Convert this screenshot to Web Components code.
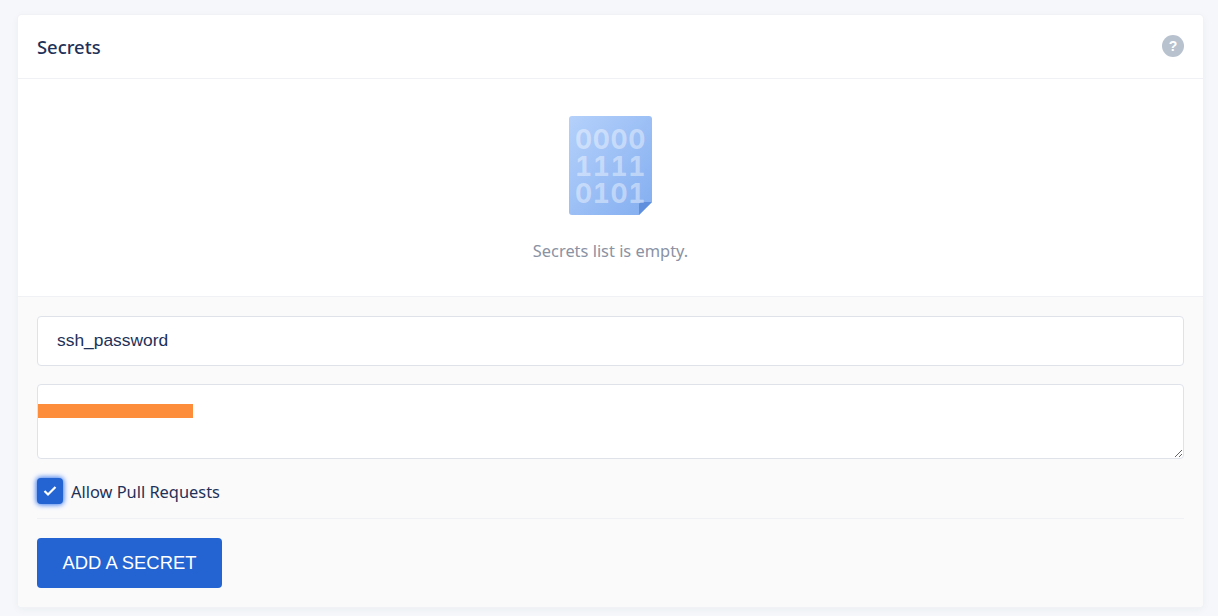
<!DOCTYPE html>
<html>
<head>
<meta charset="utf-8">
<style>
  html, body { margin: 0; height: 616px; overflow: hidden; background: #f5f7fa; }
  body { padding: 15px 15px 0 18px; box-sizing: border-box; font-family: "Noto Sans", sans-serif; color: #1e3158; }
</style>
</head>
<body>
<secrets-card>
  <span slot="title">Secrets</span>
  <empty-state>Secrets list is empty.</empty-state>
  <secret-form slot="footer"></secret-form>
</secrets-card>

<script>
class SecretsCard extends HTMLElement {
  constructor() {
    super();
    this.attachShadow({ mode: "open" });
    this.shadowRoot.innerHTML = `
      <style>
        :host {
          display: block;
          background: #fff;
          border-radius: 4px;
          box-shadow: 0 0 0 1px #f0f2f6, 0 2px 8px rgba(40,50,80,0.05);
          overflow: hidden;
        }
        header {
          height: 64px;
          box-sizing: border-box;
          padding: 0 19px 0 19px;
          display: flex;
          align-items: center;
          justify-content: space-between;
          border-bottom: 1px solid #eff1f5;
          font-size: 18.4px;
          font-weight: 500;
          color: #1e3158;
        }
        .help {
          width: 22px;
          height: 22px;
          margin-top: -1px;
          border-radius: 50%;
          background: #b8c2cf;
          color: #fff;
          font: 700 14px/22px "Liberation Sans", sans-serif;
          text-align: center;
        }
        footer { background: #fafafb; border-top: 1px solid #eff1f5; }
      </style>
      <header><slot name="title"></slot><div class="help">?</div></header>
      <slot></slot>
      <footer><slot name="footer"></slot></footer>
    `;
  }
}

class EmptyState extends HTMLElement {
  constructor() {
    super();
    this.attachShadow({ mode: "open" });
    this.shadowRoot.innerHTML = `
      <style>
        :host {
          display: flex;
          flex-direction: column;
          align-items: center;
          height: 217px;
          box-sizing: border-box;
          padding-top: 37px;
          color: #8a92a3;
          font-size: 16.4px;
          line-height: 22px;
        }
        .icon { position: relative; width: 84px; height: 100px; margin-bottom: 24px; }
        svg { display: block; }
        .bits {
          position: absolute;
          left: 0;
          right: 0;
          top: 10px;
          text-align: center;
          font: 700 26.5px/27px Inter, sans-serif;
          font-variant-numeric: tabular-nums;
          letter-spacing: .6px;
          color: rgba(255,255,255,.42);
        }
      </style>
      <div class="icon">
        <svg width="84" height="100" viewBox="0 0 84 100">
          <defs>
            <linearGradient id="page" x1="0" y1="0" x2="1" y2="1">
              <stop offset="0" stop-color="#b5d1fb"/>
              <stop offset="1" stop-color="#83aef0"/>
            </linearGradient>
          </defs>
          <path d="M3 0H80a3 3 0 0 1 3 3V86L70 99H3a3 3 0 0 1-3-3V3a3 3 0 0 1 3-3Z" fill="url(#page)"/>
          <path d="M83 86L70 99V89a3 3 0 0 1 3-3Z" fill="#5f8fdd"/>
        </svg>
        <div class="bits"><div>0000</div><div>1111</div><div>0101</div></div>
      </div>
      <slot></slot>
    `;
  }
}

class SecretForm extends HTMLElement {
  constructor() {
    super();
    this.attachShadow({ mode: "open" });
    this.shadowRoot.innerHTML = `
      <style>
        :host { display: block; padding: 19px 19px 19px 19px; }
        input[type=text], textarea {
          display: block;
          width: 100%;
          box-sizing: border-box;
          background: #fff;
          border: 1px solid #dfe2e9;
          border-radius: 4px;
          color: #1e3158;
          font: 17.4px "Liberation Sans", sans-serif;
          outline: none;
          margin: 0;
        }
        input[type=text] { height: 50px; padding: 0 19px 2px; }
        .secret { position: relative; margin-top: 18px; height: 75px; }
        textarea { height: 75px; padding: 10px 19px; }
        .mask { position: absolute; left: 1px; top: 20px; width: 155px; height: 14px; background: #fd8c3b; }
        label {
          display: flex;
          align-items: center;
          gap: 8px;
          height: 60px;
          box-sizing: border-box;
          padding-top: 5px;
          font-size: 16.4px;
          color: #1e3158;
          border-bottom: 1px solid #f0f1f5;
        }
        .box {
          width: 26px;
          height: 26px;
          border-radius: 4px;
          background: #2364d2;
          box-shadow: 0 0 5px 1px #3f7cf0;
          display: flex;
          align-items: center;
          justify-content: center;
        }
        button {
          display: block;
          margin-top: 19px;
          width: 185px;
          height: 50px;
          border: 0;
          border-radius: 4px;
          background: #2364d2;
          color: #fff;
          font: 18.4px "Liberation Sans", sans-serif;
          padding: 0;
        }
      </style>
      <input type="text" value="ssh_password">
      <div class="secret"><textarea></textarea><div class="mask"></div></div>
      <label>
        <span class="box">
          <svg width="14" height="12" viewBox="0 0 14 12"><path d="M1.5 6L5 9.5L12.5 2" fill="none" stroke="#fff" stroke-width="2.2"/></svg>
        </span>
        Allow Pull Requests
      </label>
      <button>ADD A SECRET</button>
    `;
  }
}

customElements.define("secrets-card", SecretsCard);
customElements.define("empty-state", EmptyState);
customElements.define("secret-form", SecretForm);
</script>
</body>
</html>
